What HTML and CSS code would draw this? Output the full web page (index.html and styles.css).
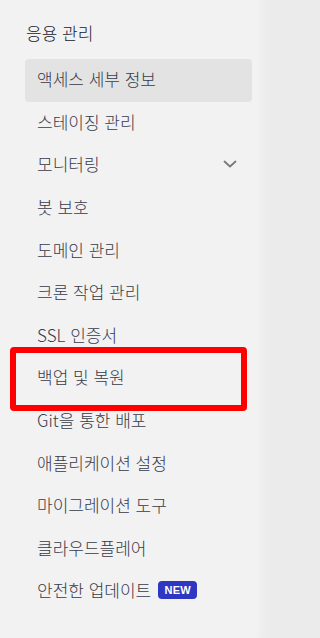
FILE: index.html
```html
<!DOCTYPE html>
<html lang="ko">
<head>
<meta charset="utf-8">
<link rel="stylesheet" href="styles.css">
</head>
<body>
<nav class="sidebar">
  <div class="heading">응용 관리</div>
  <ul class="menu">
    <li class="item active">액세스 세부 정보</li>
    <li class="item">스테이징 관리</li>
    <li class="item has-sub">모니터링
      <svg class="chev" width="14" height="8" viewBox="0 0 14 8"><path d="M1.5 1.5 L7 6.5 L12.5 1.5" fill="none" stroke="#7a7a7a" stroke-width="1.8" stroke-linecap="round" stroke-linejoin="round"/></svg>
    </li>
    <li class="item">봇 보호</li>
    <li class="item">도메인 관리</li>
    <li class="item">크론 작업 관리</li>
    <li class="item">SSL 인증서</li>
    <li class="item">백업 및 복원</li>
    <li class="item">Git을 통한 배포</li>
    <li class="item">애플리케이션 설정</li>
    <li class="item">마이그레이션 도구</li>
    <li class="item">클라우드플레어</li>
    <li class="item">안전한 업데이트<span class="badge">NEW</span></li>
  </ul>
  <div class="highlight"></div>
</nav>
</body>
</html>
```
FILE: styles.css
```css
html {
  margin: 0;
  padding: 0;
  background: #f2f2f2;
}
body {
  margin: 0;
  padding: 0;
  min-height: 638px;
  font-family: "Noto Sans CJK KR", "Inter", sans-serif;
  background: linear-gradient(to right, #f2f2f2 0, #f2f2f2 256px, #eeeeee 262px, #ebebeb 270px, #ebebeb 100%);
}
.sidebar {
  position: relative;
  width: 227px;
  padding: 21px 0 0 25px;
}
.heading {
  font-size: 17px;
  font-weight: 300;
  color: #15192a;
  line-height: 24px;
  padding-left: 1px;
  margin-bottom: 14px;
}
.menu {
  list-style: none;
  margin: 0;
  padding: 0;
}
.item {
  height: 42.6px;
  display: flex;
  align-items: center;
  padding: 0 15px 3px 12px;
  font-size: 17px;
  font-weight: 300;
  color: #363a4a;
  border-radius: 4px;
  box-sizing: border-box;
}
.item.active {
  background: #e3e3e3;
}
.has-sub {
  justify-content: space-between;
}
.chev {
  display: block;
  margin-top: 1px;
}
.badge {
  display: inline-flex;
  align-items: center;
  justify-content: center;
  margin-left: 7px;
  width: 39px;
  height: 18px;
  border-radius: 4px;
  background: #2f36c2;
  color: #ffffff;
  font-family: "Liberation Sans", "Inter", sans-serif;
  font-weight: bold;
  font-size: 11px;
  letter-spacing: 0.2px;
}
.highlight {
  position: absolute;
  left: 10px;
  top: 347px;
  width: 237px;
  height: 64px;
  border: 6px solid #ff0000;
  border-radius: 4px;
  box-sizing: border-box;
}
```
